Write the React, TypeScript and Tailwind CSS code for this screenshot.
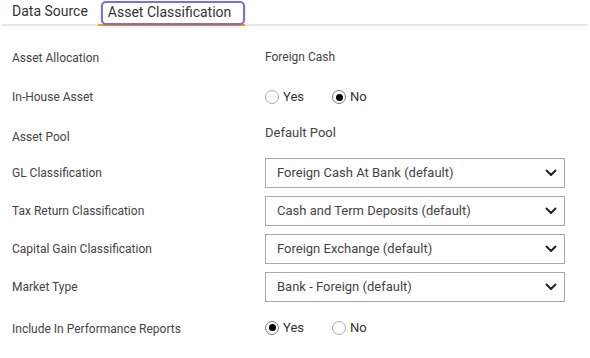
import React from "react";

const Chevron = () => (
  <svg width="12" height="8" viewBox="0 0 12 8" className="shrink-0">
    <path d="M1.5 1.5 L6 6 L10.5 1.5" fill="none" stroke="#222" strokeWidth="2" strokeLinecap="round" strokeLinejoin="round" />
  </svg>
);

const Radio = ({ checked, label }: { checked: boolean; label: string }) => (
  <div className="flex items-center">
    <span
      className={
        checked
          ? "w-[14px] h-[14px] rounded-full border border-[#777] flex items-center justify-center"
          : "w-[14px] h-[14px] rounded-full border border-[#aaa]"
      }
    >
      {checked && <span className="w-[7px] h-[7px] rounded-full bg-black" />}
    </span>
    <span className="ml-[4px] text-[13px] text-[#333]">{label}</span>
  </div>
);

const Select = ({ value }: { value: string }) => (
  <div className="w-[300px] h-[30px] border border-[#a9a9a9] flex items-center justify-between pl-[11px] pr-[7px] text-[13px] text-[#444]">
    <span>{value}</span>
    <Chevron />
  </div>
);

const Row = ({ label, children, className }: { label: string; children: React.ReactNode; className: string }) => (
  <div className={"flex items-center h-[30px] " + className}>
    <div className="w-[253px] text-[12px] text-[#444]">{label}</div>
    <div className="flex items-center">{children}</div>
  </div>
);

export default function App() {
  return (
    <div className="w-[590px] h-[358px] bg-white overflow-hidden" style={{ fontFamily: "Roboto, 'Liberation Sans', sans-serif" }}>
      <div className="relative h-[26px] mx-[2px]">
        <div className="absolute left-0 right-0 bottom-0 h-[2px] bg-[#e6e6e6]" />
        <div className="flex items-start h-full">
          <div className="pl-[10px] pr-[10px] pt-[1px] text-[14px] text-[#333] h-full">Data Source</div>
          <div className="relative w-[147px] h-full border-b-2 border-[#f59e0b]">
            <div className="absolute left-[3px] right-0 top-[1px] bottom-[-1px] rounded-[5px] border-2 border-[#7b6ee0] shadow-[0_1px_3px_rgba(0,0,0,0.15)] bg-white pl-[5px] text-[14px] text-[#333] leading-[18px]">
              Asset Classification
            </div>
          </div>
        </div>
      </div>
      <div className="pl-[12px]">
        <Row label="Asset Allocation" className="mt-[17px]">
          <span className="text-[12px] text-[#444] -mt-[2px]">Foreign Cash</span>
        </Row>
        <Row label="In-House Asset" className="mt-[9px]">
          <Radio checked={false} label="Yes" />
          <div className="ml-[28px]">
            <Radio checked={true} label="No" />
          </div>
        </Row>
        <Row label="Asset Pool" className="mt-[10px]">
          <span className="text-[13px] text-[#444] -mt-[8px]">Default Pool</span>
        </Row>
        <Row label="GL Classification" className="mt-[6px]">
          <Select value="Foreign Cash At Bank (default)" />
        </Row>
        <Row label="Tax Return Classification" className="mt-[8px]">
          <Select value="Cash and Term Deposits (default)" />
        </Row>
        <Row label="Capital Gain Classification" className="mt-[8px]">
          <Select value="Foreign Exchange (default)" />
        </Row>
        <Row label="Market Type" className="mt-[8px]">
          <Select value="Bank - Foreign (default)" />
        </Row>
        <Row label="Include In Performance Reports" className="mt-[12px]">
          <div className="flex items-center -mt-[3px]">
            <Radio checked={true} label="Yes" />
            <div className="ml-[28px]">
              <Radio checked={false} label="No" />
            </div>
          </div>
        </Row>
      </div>
    </div>
  );
}
